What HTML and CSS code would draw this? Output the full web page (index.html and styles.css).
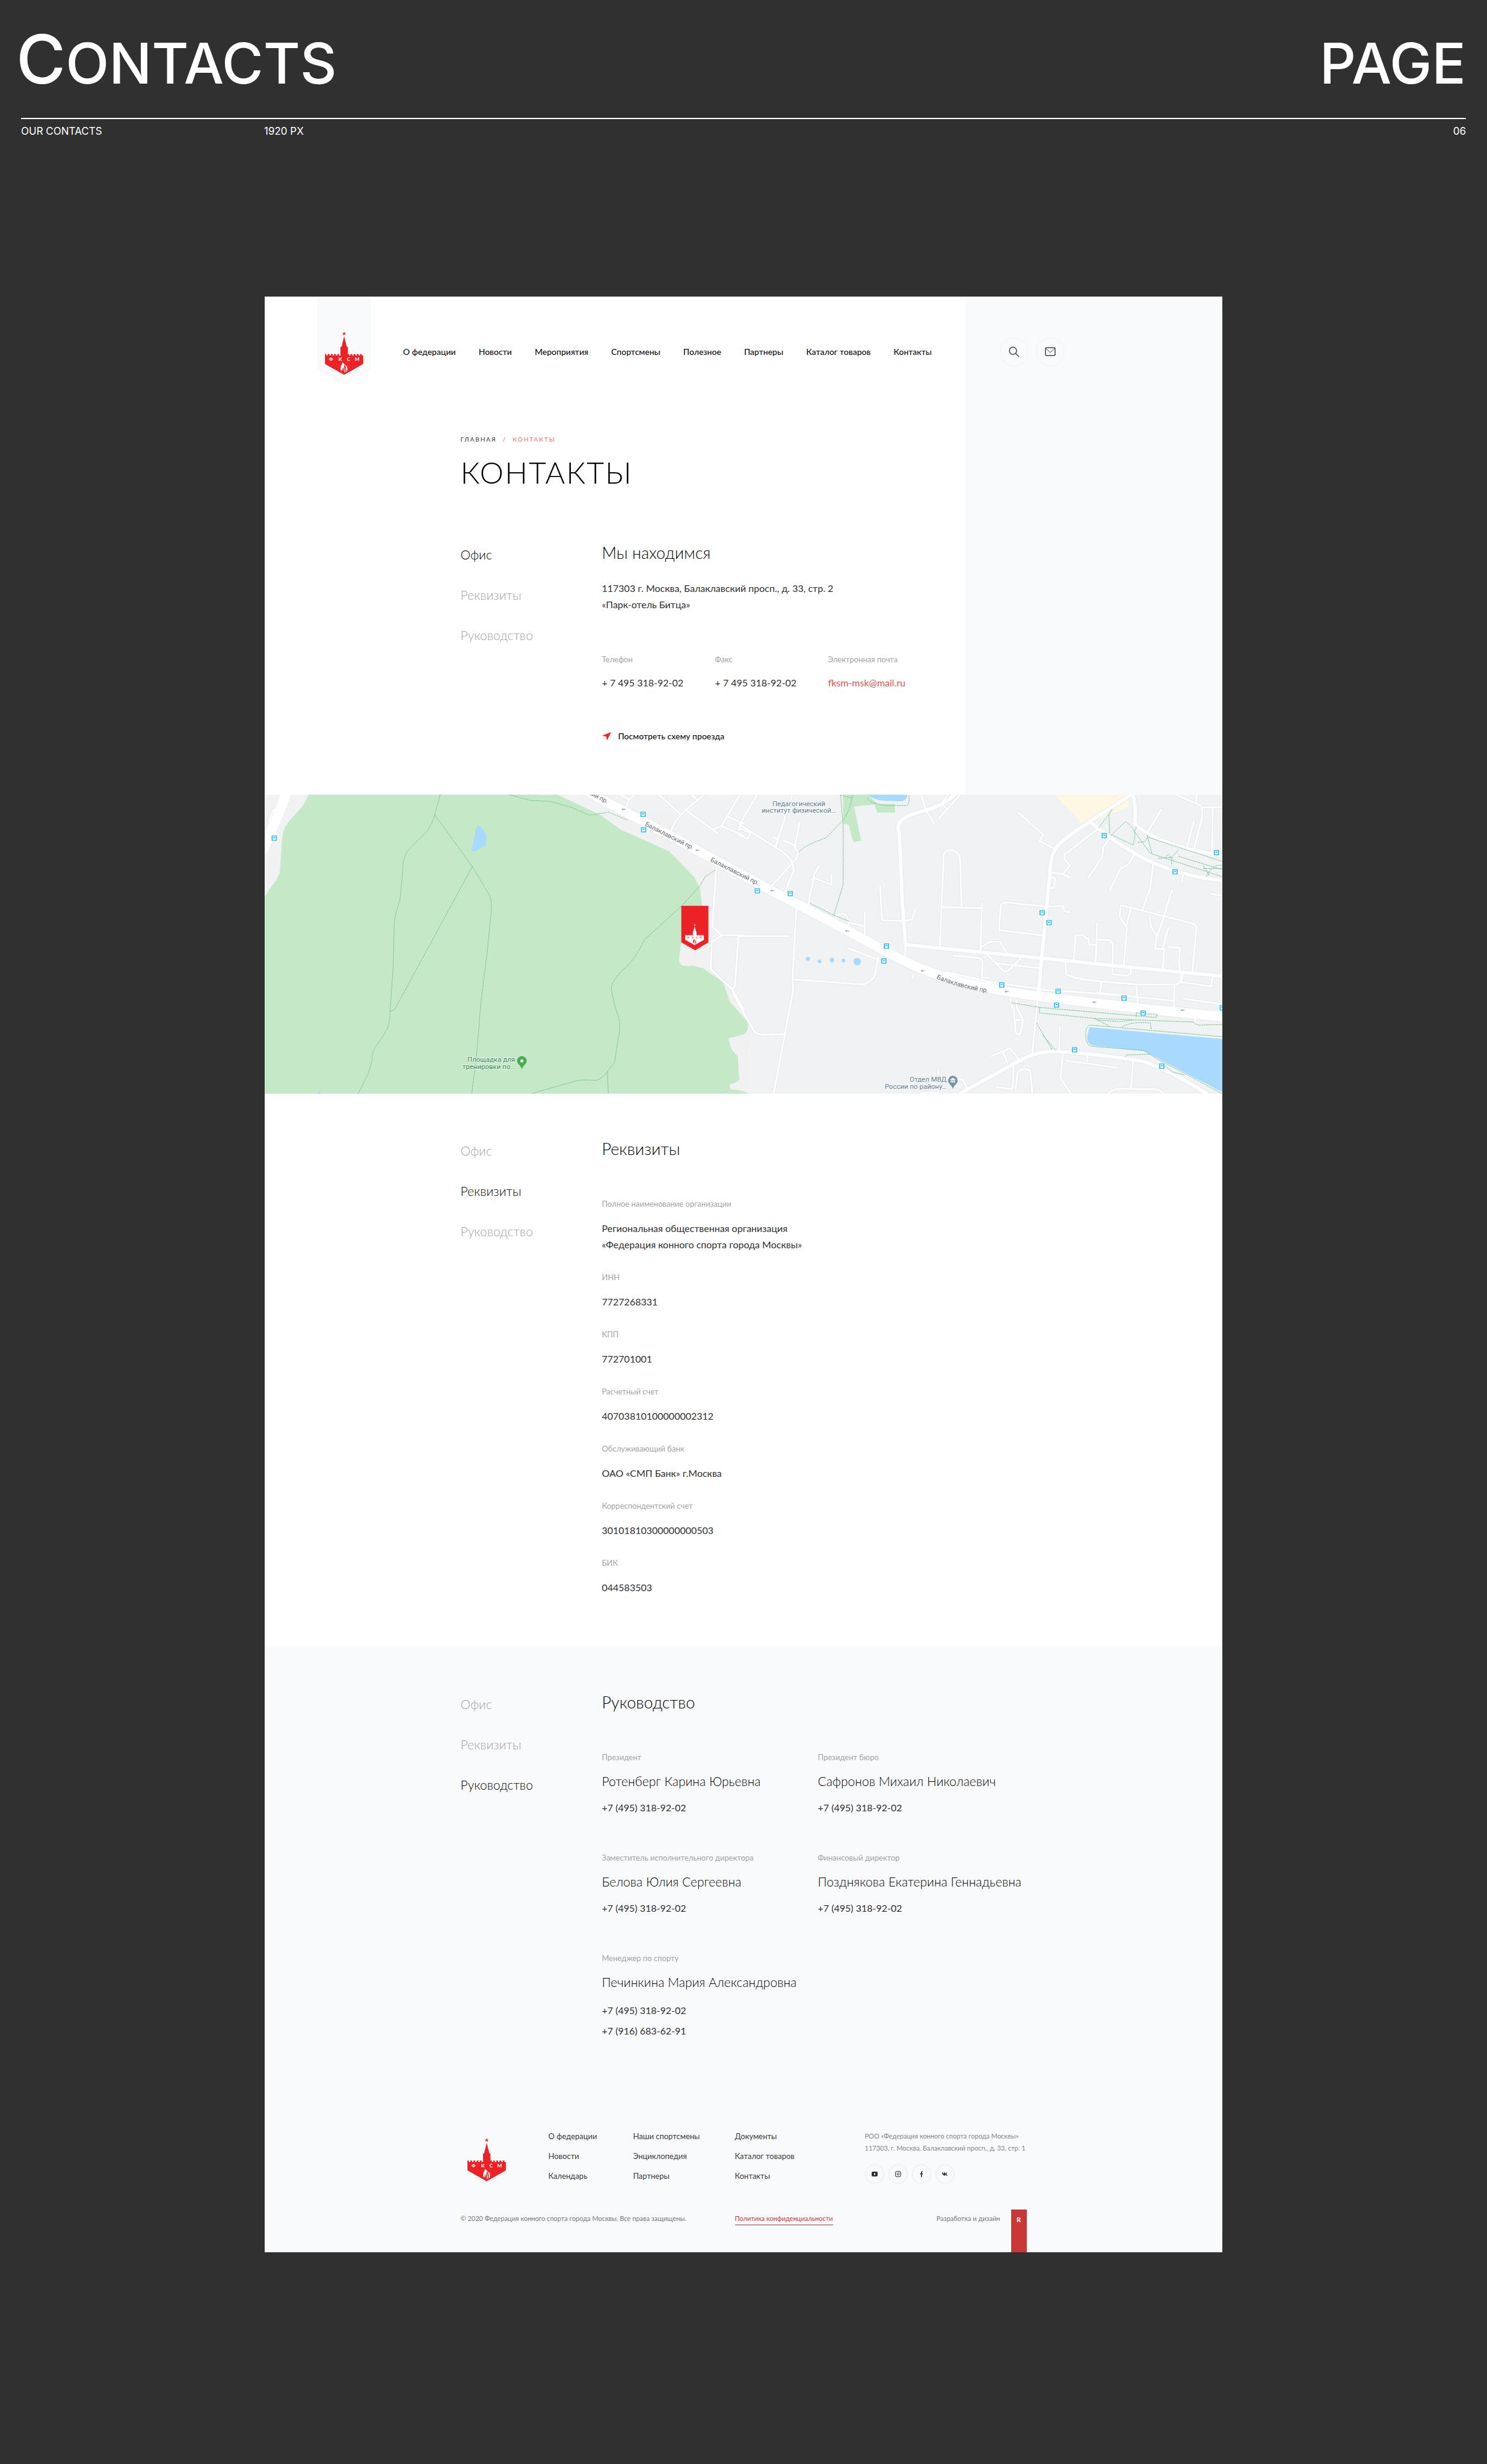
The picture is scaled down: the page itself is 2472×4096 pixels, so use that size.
FILE: index.html
```html
<!DOCTYPE html>
<html lang="ru">
<head>
<meta charset="utf-8">
<meta name="viewport" content="width=device-width, initial-scale=1">
<title>Контакты</title>
<link rel="stylesheet" href="styles.css">
</head>
<body>
<svg class="defs" aria-hidden="true">
  <symbol id="tower" viewBox="0 0 217 245">
    <g fill="var(--logo-ink)">
      <path d="M109 1l3 8h8l-6 5 2 8-7-5-7 5 2-8-6-5h8z"/>
      <path d="M109 27l15 61h6v40h8v8h7v-8h10v8h8v-8h10v8h8v-8h10v8h8v-8h10v8h8v48l-108 61L0 184v-56h8v8h8v-8h10v8h8v-8h10v8h8v-8h10v8h8v-8h10v8h8V88h6z"/>
    </g>
    <g fill="var(--logo-cut)">
      <path d="M99 175l-2 9c-6 8-9 20-8 31 0 6 5 9 8 5l3-11c4-2 7-6 9-10-2 10-6 16-5 27-6-13 5-24 6-37 0-8-5-10-11-14z"/>
      <path d="M106 183c12 7 20 17 22 30 0 7-3 14-9 18 5-17 0-34-13-48z"/>
      <path d="M110 200c7 11 9 23 0 36 0-13 3-22 0-36zM121 189c6 7 10 15 10 25-1-9-5-17-10-25z"/>
    </g>
  </symbol>
  <symbol id="bus" viewBox="0 0 12 12">
    <rect width="12" height="12" rx="2" fill="#fff"/>
    <rect x="1" y="1" width="10" height="10" rx="1" fill="#2bbcf2"/>
    <path d="M3 2.500h6v6.500h-1v1H7v-1H5v1H4v-1H3z" fill="#fff"/>
    <path d="M4 4h4v2H4z" fill="#2bbcf2"/>
  </symbol>
  <symbol id="arrow" viewBox="0 0 10 8">
    <path d="M0 4l5-3-1 2h6v2H4l1 2z" fill="#a0a5aa"/>
  </symbol>
</svg>

<header class="board-head">
  <div class="board-title">
    <h2 class="board-name"><span class="board-initial">C</span>ONTACTS</h2>
    <p class="board-name">PAGE</p>
  </div>
  <div class="board-meta">
    <span>OUR CONTACTS</span>
    <span>1920 PX</span>
    <span class="board-number">06</span>
  </div>
</header>

<div class="site">
  <div class="hero">
    <header class="topbar">
      <a class="badge" href="#" aria-label="ФКСМ"><svg class="logo" viewBox="0 0 217 245"><use href="#tower" width="217" height="245"/><text class="logo-text" x="35 87 134 182" y="166">ФКСМ</text></svg></a>
      <nav class="menu">
        <a href="#">О федерации</a>
        <a href="#">Новости</a>
        <a href="#">Мероприятия</a>
        <a href="#">Спортсмены</a>
        <a href="#">Полезное</a>
        <a href="#">Партнеры</a>
        <a href="#">Каталог товаров</a>
        <a href="#">Контакты</a>
      </nav>
      <div class="tools">
        <button class="round" type="button" aria-label="Поиск">
          <svg width="18" height="18" viewBox="0 0 18 18" fill="none" stroke="#444" stroke-width="1.500"><circle cx="7" cy="7" r="6"/><path d="M11.500 11.500L17 17"/></svg>
        </button>
        <button class="round" type="button" aria-label="Написать письмо">
          <svg width="18" height="16" viewBox="0 0 18 16" fill="none" stroke-width="1.500"><path d="M1.500 2L9 9l7.500-7" stroke="#999"/><rect x="1" y="1" width="16" height="13" rx="1.500" stroke="#444"/></svg>
        </button>
      </div>
    </header>
    <div class="content">
      <nav class="crumbs"><a href="#">ГЛАВНАЯ</a><span class="crumb-sep">/</span><span class="crumb-here">КОНТАКТЫ</span></nav>
      <h1 class="page-title">КОНТАКТЫ</h1>
      <section class="split">
        <nav class="side">
          <a class="current" href="#office" id="office">Офис</a>
          <a href="#details">Реквизиты</a>
          <a href="#team">Руководство</a>
        </nav>
        <div>
          <h2 class="heading">Мы находимся</h2>
          <address class="address">117303 г. Москва, Балаклавский просп., д. 33, стр. 2<br>«Парк-отель Битца»</address>
          <dl class="phones">
            <div><dt>Телефон</dt><dd>+ 7 495 318-92-02</dd></div>
            <div><dt>Факс</dt><dd>+ 7 495 318-92-02</dd></div>
            <div><dt>Электронная почта</dt><dd><a class="mail" href="#">fksm-msk@mail.ru</a></dd></div>
          </dl>
          <a class="route" href="#">
            <svg width="15" height="14" viewBox="0 0 15 14"><path d="M15 0L8 14 7 7.500 0 6z" fill="#ec2227"/></svg>
            Посмотреть схему проезда
          </a>
        </div>
      </section>
    </div>
  </div>

  <svg class="map" viewBox="0 0 1802 563" role="img" aria-label="Карта проезда">
    <defs>
      <g id="streets-east">
        <path d="M0 185L50 235 115 298Q165 345 172 380L177 412 145 535"/>
        <path d="M60 40L15 155 0 215M172 40L118 300M0 240L28 260 38 230 8 210M110 250L125 262M195 180L180 300 190 325 185 355 100 500M145 268L185 295"/>
        <path d="M258 392L243 430 222 590M240 450L298 485 297 435"/>
        <path d="M185 610L172 950 175 1000 148 1220 112 1512M0 737L160 738M172 950L400 975Q430 960 438 925L448 840M352 797L450 855"/>
        <path d="M-20 1010L10 1100 50 1205Q60 1222 80 1222L148 1220"/>
        <path d="M305 660Q315 625 335 628 358 640 350 705M405 618L404 745M352 670L404 688"/>
        <path d="M585 40L600 115 627 185M600 115L650 85 672 40M650 85L670 115M710 40L643 157"/>
        <path d="M453 490L460 660 528 663 557 655 565 608"/>
        <path d="M645 790L658 330Q675 305 690 318 708 330 710 360L715 588M650 594L778 600M780 575L775 810"/>
        <path d="M535 780L533 860M560 925L558 945M775 795L805 765H838L862 825M795 825L850 910Q860 912 870 900L905 845M830 872L970 895"/>
        <path d="M688 833L770 845Q782 850 782 870L780 942 803 942M615 905L650 920 670 915 810 965 960 995M800 965L812 985"/>
        <path d="M897 130L977 238 965 270 1015 310M835 708L840 590Q845 570 860 572L985 592 1040 590 1045 615 1062 620M835 708L970 733"/>
        <path d="M1000 425L1040 432 1062 450M1000 448L1015 455 1010 500 998 502M1148 215L1045 335 1045 360 1062 390 1042 430"/>
        <path d="M1190 255L1170 300 1165 350 1122 450M1270 330L1250 385 1225 405 1190 512M1330 375L1320 500 1295 607M1355 115L1312 225"/>
        <path d="M1075 855L1080 735 1100 730 1123 755V780H1145M1150 675L1145 860M1150 755L1185 757Q1202 765 1200 790L1198 925 1245 932 1258 920V900"/>
        <path d="M1235 885L1245 700 1222 640 1225 585 1455 675Q1470 685 1468 700L1455 910M1258 600L1243 690M1318 645L1322 690 1340 735 1336 800H1360L1378 695M1390 510L1362 650 1342 740M1378 790L1415 795 1412 860 1420 970M1365 800L1360 900"/>
        <path d="M1048 865L1050 925Q1080 950 1160 960L1280 975H1400Q1425 970 1425 910M1163 965L1158 1018 1250 1030M1275 975L1280 1065M1398 980L1395 1085M1425 965L1515 985 1520 940M1425 1045L1560 1075M965 1000L1160 1020 1395 1055"/>
        <path d="M870 1045L882 1100 888 1210Q900 1230 905 1210L912 1150 893 1090 890 1050M885 1152L910 1148"/>
        <path d="M958 1060L942 1310M1030 1185L1028 1300M1040 1310L1032 1435 1065 1512M1050 1350L1218 1385M1118 1325V1355M1265 1345L1258 1490M1185 1512Q1200 1485 1240 1488L1330 1490Q1355 1495 1362 1512"/>
        <path d="M810 1328L870 1288 905 1355M848 1308L862 1360M882 1365L878 1490 825 1480M942 1512L935 1400Q915 1380 895 1405L888 1490M580 1512Q610 1498 640 1512V1398M700 1440L720 1445 730 1480"/>
        <path d="M1400 40L1480 95Q1490 110 1485 160L1460 310M1490 105L1550 103M1520 105L1518 345M1460 170L1437 305M1468 40V85M1515 530L1550 538M1425 430L1422 470M1462 1140L1465 1165"/>
      </g>
      <g id="streets-west">
        <path d="M1165 40L1195 65 1215 40M1195 65L1182 118M1290 40L1360 135M1440 40L1380 115Q1340 170 1330 225M1400 45L1418 70M1380 118L1482 232M1470 210L1495 195 1568 245M1495 195L1555 40M1515 150L1568 185"/>
        <path d="M1478 400L1465 690 1495 733H1568M1495 733L1465 765M1463 760L1460 900 1530 1000 1568 1100M1550 740L1538 985 1530 1000"/>
        <path d="M65 110L42 115 28 170 35 195"/>
      </g>
      <g id="avenues">
        <path d="M695 40Q655 95 610 115 540 140 520 170 505 200 515 230L525 580 535 780"/>
        <path d="M535 780L800 820 1060 860 1250 890 1560 935"/>
        <path d="M1260 40L1120 180Q1030 270 1015 310 1000 350 998 430L972 840 960 1040"/>
        <path d="M1130 180L1190 250Q1280 350 1350 390 1450 450 1560 465M1262 40Q1275 70 1270 180 1280 210 1340 255 1430 315 1560 345"/>
        <path d="M710 1512L900 1350Q960 1300 1020 1305 1180 1320 1300 1355 1400 1410 1500 1512"/>
      </g>
      <path id="prospekt" d="M-560 -40L-446 60-223 240-50 385 100 510 300 670 480 820Q600 920 720 965 850 1015 1000 1040L1300 1095 1560 1135"/>
      <path id="prospekt-name" d="M1264 346Q1310 366 1390 377"/>
    </defs>

    <rect width="1802" height="563" fill="#f1f2f4"/>
    <g class="east">
      <path d="M1010 40L1100 180 1125 180 1250 100V40z" fill="#fef7e3"/>
      <path d="M335 40H412L445 88H500L502 130H445L435 90 370 100 393 268 368 275 352 188 335 185z" fill="#c5e8c6"/>
      <path d="M412 40Q430 68 470 72L525 74Q542 65 540 40z" fill="#a8d9fe"/>
      <path d="M1125 1185L1560 1245V1512L1300 1303 1135 1275Q1115 1265 1118 1230z" fill="#a8d9fe"/>
      <g fill="#a8d9fe"><ellipse cx="222" cy="849" rx="7" ry="10"/><ellipse cx="259" cy="861" rx="6" ry="9"/><ellipse cx="299" cy="855" rx="7" ry="12"/><ellipse cx="336" cy="858" rx="6" ry="9"/><ellipse cx="380" cy="863" rx="12" ry="18"/></g>
      <path d="M0 1380L6 1440 0 1512H30L0 1490z" fill="#c5e8c6"/>
    </g>
    <g class="west">
      <path d="M1100 140L1330 310 1480 420 1465 700V860L1530 1010 1590 1170 1568 1512H1350V140z" fill="#f1f1f1"/>
      <path d="M157 40C140 110 100 150 80 200 65 250 70 330 62 430 50 470 30 500 14 545V1512H1585L1565 1500 1522 1488V1465Q1552 1455 1552 1440L1548 1330 1528 1295 1517 1240 1568 1220Q1585 1200 1580 1160L1522 1060 1500 965 1435 895 1400 882Q1358 895 1357 850L1365 760V590H1432L1425 500 1408 450 1325 320 1170 215 1100 140 960 40Q930 46 900 42L880 40z" fill="#c5e8c6"/>
      <path d="M706 193L718 205 732 240V288L695 322 684 318Q684 300 690 280L698 215z" fill="#a8d9fe"/>
      <path d="M183 1512L190 1498 197 1512zM1485 1512L1512 1500 1515 1503z" fill="#a8d9fe"/>
    </g>

    <g class="casing">
      <g class="east minor"><use href="#streets-east"/></g>
      <g class="west minor"><use href="#streets-west"/></g>
      <g class="east avenue"><use href="#avenues"/></g>
      <g class="east prospekt"><use href="#prospekt"/></g>
    </g>
    <g class="surface">
      <g class="east minor"><use href="#streets-east"/></g>
      <g class="west minor"><use href="#streets-west"/></g>
      <g class="east avenue"><use href="#avenues"/></g>
      <g class="east prospekt"><use href="#prospekt"/></g>
      <g class="west prospekt"><path d="M88 20L60 130 10 310"/></g>
    </g>

    <g class="trails">
      <g class="west">
        <path d="M583 40L565 140Q555 200 535 230L485 305Q462 340 462 400 458 480 452 560 435 640 434 680L430 900 420 1108Q420 1180 405 1210L375 1280Q360 1310 362 1350L350 1410 317 1512"/>
        <path d="M565 140L687 395 740 530Q752 560 748 620L735 820 715 1060 700 1340 685 1512M687 395L440 1085 432 1102 420 1108"/>
        <path d="M802 40L875 70 940 75 1010 105 1065 143 1130 128 1190 168M1475 412L1442 445 1425 490 1365 590 1245 755Q1215 850 1185 890 1140 950 1138 995 1145 1070 1160 1130 1170 1190 1160 1240L1148 1360 1125 1405Q1100 1450 1080 1447 1040 1440 1010 1455L880 1512M1125 1405L1128 1512"/>
      </g>
      <g class="east">
        <path d="M327 40L335 200V485L305 635 228 575M305 635L355 665M365 40Q360 120 330 175L280 255Q210 290 192 325M325 45L365 58M412 60Q430 90 480 95H540Q550 80 545 40"/>
        <path d="M1155 205L1198 115 1187 140 1190 230M1195 240L1240 175Q1275 210 1270 250L1265 290 1195 238M1275 200L1270 225 1320 330 1550 445M1310 240L1325 330M1280 275Q1310 280 1310 250L1550 370M1345 355L1390 350 1388 385M1410 315L1385 355Q1380 320 1370 350M1410 345L1550 410M1490 390L1510 440M1550 405H1490M1500 445Q1520 380 1550 390"/>
        <path d="M875 1065L965 1088 1340 1138 1342 1122 1275 1115V1135M965 1088V1115L1140 1142 1460 1160Q1465 1175 1480 1175L1550 1172M1140 1142L1190 1180M1150 1150L1220 1158 1265 1150M1228 1185Q1260 1155 1320 1165L1323 1195M955 1165L1005 1295M975 1225L1018 1300"/>
        <path d="M1550 1232L1130 1175Q1112 1180 1113 1220 1112 1275 1135 1280L1300 1300 1340 1340 1440 1420 1550 1512M1240 1330L1245 1322 1320 1318M1355 1360L1390 1405 1430 1420"/>
      </g>
    </g>

    <use href="#arrow" x="671" y="24" width="8" height="7"/>
    <use href="#arrow" x="810" y="101" width="8" height="7"/>
    <use href="#arrow" x="951" y="177" width="8" height="7"/>
    <use href="#arrow" x="1092" y="253" width="8" height="7"/>
    <use href="#arrow" x="1234" y="328" width="8" height="7"/>
    <use href="#arrow" x="1392" y="367" width="8" height="7"/>
    <use href="#arrow" x="1557" y="387" width="8" height="7"/>
    <use href="#arrow" x="1723" y="402" width="8" height="7"/>

    <g>
      <use href="#bus" x="921" y="175" width="12" height="12"/>
      <use href="#bus" x="983" y="180" width="12" height="12"/>
      <use href="#bus" x="1164" y="279" width="12" height="12"/>
      <use href="#bus" x="1159" y="307" width="12" height="12"/>
      <use href="#bus" x="1574" y="71" width="12" height="12"/>
      <use href="#bus" x="1785" y="103" width="12" height="12"/>
      <use href="#bus" x="1707" y="139" width="12" height="12"/>
      <use href="#bus" x="1457" y="216" width="12" height="12"/>
      <use href="#bus" x="1470" y="235" width="12" height="12"/>
      <use href="#bus" x="1381" y="352" width="12" height="12"/>
      <use href="#bus" x="1487" y="364" width="12" height="12"/>
      <use href="#bus" x="1484" y="390" width="12" height="12"/>
      <use href="#bus" x="1611" y="377" width="12" height="12"/>
      <use href="#bus" x="1647" y="405" width="12" height="12"/>
      <use href="#bus" x="1796" y="395" width="12" height="12"/>
      <use href="#bus" x="1518" y="474" width="12" height="12"/>
      <use href="#bus" x="1682" y="505" width="12" height="12"/>
      <use href="#bus" x="706" y="31" width="12" height="12"/>
      <use href="#bus" x="707" y="60" width="12" height="12"/>
      <use href="#bus" x="12" y="76" width="12" height="12"/>
    </g>

    <g class="street-name">
      <text transform="translate(644 17) rotate(27)" text-anchor="end">Балаклавский пр.</text>
      <text transform="translate(715 58) rotate(27)">Балаклавский пр.</text>
      <text transform="translate(838 125) rotate(27)">Балаклавский пр.</text>
      <text><textPath href="#prospekt-name">Балаклавский пр.</textPath></text>
    </g>
    <g class="place" fill="#5f7f8f">
      <text x="1005" y="21" text-anchor="middle">Педагогический</text>
      <text x="1005" y="34" text-anchor="middle">институт физической…</text>
      <text x="1283" y="540" text-anchor="end">Отдел МВД</text>
      <text x="1283" y="553" text-anchor="end">России по району…</text>
      <path d="M1295 529a9 9 0 0 1 9 9c0 6-7 8-9 16-2-8-9-10-9-16a9 9 0 0 1 9-9z" fill="#7494a5"/>
      <path d="M1290 536l5-3 5 3v1h-10zM1291 538h2v4h-2zM1294 538h2v4h-2zM1297 538h2v4h-2z" fill="#fff"/>
    </g>
    <g class="place" fill="#2f8550">
      <text x="471" y="503" text-anchor="end">Площадка для</text>
      <text x="471" y="516" text-anchor="end">тренировки по…</text>
      <path d="M484 492a9 9 0 0 1 9 9c0 6-7 8-9 16-2-8-9-10-9-16a9 9 0 0 1 9-9z" fill="#45af4b"/>
      <circle cx="484" cy="501" r="3" fill="#fff"/>
    </g>

    <path d="M784 209h51v69l-25 15-26-15z" fill="#ec2227"/>
    <svg class="pin-logo" x="791" y="243" width="36" height="40" viewBox="0 0 217 245"><use href="#tower" width="217" height="245"/><text class="logo-text" x="35 87 134 182" y="166">ФКСМ</text></svg>
  </svg>

  <section class="section content split" id="details">
    <nav class="side">
      <a href="#office">Офис</a>
      <a class="current" href="#details">Реквизиты</a>
      <a href="#team">Руководство</a>
    </nav>
    <div>
      <h2 class="heading">Реквизиты</h2>
      <dl class="facts">
        <div><dt>Полное наименование организации</dt><dd>Региональная общественная организация<br>«Федерация конного спорта города Москвы»</dd></div>
        <div><dt>ИНН</dt><dd>7727268331</dd></div>
        <div><dt>КПП</dt><dd>772701001</dd></div>
        <div><dt>Расчетный счет</dt><dd>40703810100000002312</dd></div>
        <div><dt>Обслуживающий банк</dt><dd>ОАО «СМП Банк» г.Москва</dd></div>
        <div><dt>Корреспондентский счет</dt><dd>30101810300000000503</dd></div>
        <div><dt>БИК</dt><dd>044583503</dd></div>
      </dl>
    </div>
  </section>

  <div class="tinted">
    <section class="content split team-section" id="team">
      <nav class="side">
        <a href="#office">Офис</a>
        <a href="#details">Реквизиты</a>
        <a class="current" href="#team">Руководство</a>
      </nav>
      <div>
        <h2 class="heading">Руководство</h2>
        <div class="team">
          <article class="person"><p class="role">Президент</p><h3 class="name">Ротенберг Карина Юрьевна</h3><p>+7 (495) 318-92-02</p></article>
          <article class="person"><p class="role">Президент бюро</p><h3 class="name">Сафронов Михаил Николаевич</h3><p>+7 (495) 318-92-02</p></article>
          <article class="person"><p class="role">Заместитель исполнительного директора</p><h3 class="name">Белова Юлия Сергеевна</h3><p>+7 (495) 318-92-02</p></article>
          <article class="person"><p class="role">Финансовый директор</p><h3 class="name">Позднякова Екатерина Геннадьевна</h3><p>+7 (495) 318-92-02</p></article>
          <article class="person"><p class="role">Менеджер по спорту</p><h3 class="name">Печинкина Мария Александровна</h3><p class="numbers">+7 (495) 318-92-02<br>+7 (916) 683-62-91</p></article>
        </div>
      </div>
    </section>

    <footer class="content">
      <div class="foot-top">
        <a class="foot-logo" href="#" aria-label="ФКСМ"><svg class="logo" viewBox="0 0 217 245"><use href="#tower" width="217" height="245"/><text class="logo-text" x="35 87 134 182" y="166">ФКСМ</text></svg></a>
        <nav class="foot-links"><a href="#">О федерации</a><a href="#">Новости</a><a href="#">Календарь</a></nav>
        <nav class="foot-links"><a href="#">Наши спортсмены</a><a href="#">Энциклопедия</a><a href="#">Партнеры</a></nav>
        <nav class="foot-links"><a href="#">Документы</a><a href="#">Каталог товаров</a><a href="#">Контакты</a></nav>
        <div>
          <address class="foot-address">РОО «Федерация конного спорта города Москвы»<br>117303, г. Москва, Балаклавский просп., д. 33, стр. 1</address>
          <div class="social">
            <a href="#" aria-label="YouTube"><svg width="10" height="10" viewBox="0 0 10 10"><rect y="1" width="10" height="8" rx="2" fill="#2e2e2e"/><path d="M4 3l3 2-3 2z" fill="#fff"/></svg></a>
            <a href="#" aria-label="Instagram"><svg width="10" height="10" viewBox="0 0 10 10" fill="none" stroke="#2e2e2e"><rect x=".5" y=".5" width="9" height="9" rx="2.500"/><circle cx="5" cy="5" r="2"/><path d="M7.400 2.300h.6"/></svg></a>
            <a href="#" aria-label="Facebook"><svg width="10" height="10" viewBox="0 0 10 10"><path d="M4 10V5.500H2.600V4H4V2.500C4 .9 5 0 7.200.2v1.400C6 1.500 5.700 1.800 5.700 2.700V4h1.500L7 5.500H5.700V10z" fill="#2e2e2e"/></svg></a>
            <a href="#" aria-label="ВКонтакте"><svg width="10" height="10" viewBox="0 0 10 10"><path d="M0 2.500h1.600c.3 1.500.8 2.400 1.400 2.700V3.400L2.500 2.500h2.700v2.300c.7-.2 1.300-1.200 1.700-2.300h1.600C8.200 3.700 7.600 4.500 7 5c.8.5 1.700 1.400 2.200 2.700H7.500C7 6.700 6.200 6 5.200 5.900v1.800C2.300 7.900.4 6 0 2.500z" fill="#2e2e2e"/></svg></a>
          </div>
        </div>
      </div>
      <div class="foot-bottom">
        <p>© 2020 Федерация конного спорта города Москвы. Все права защищены.</p>
        <a class="policy" href="#">Политика конфиденциальности</a>
        <p class="credit">Разработка и дизайн</p>
        <a class="studio" href="#">R</a>
      </div>
    </footer>
  </div>
</div>
</body>
</html>
```
FILE: styles.css
```css
:root {
  --ink: #303030;
  --strong: #050505;
  --muted: #a3a3a6;
  --tint: #f9fafc;
  --logo-ink: #ec2227;
  --logo-cut: #fff;
}

* { box-sizing: border-box; }

body {
  margin: 0;
  padding-bottom: 350px;
  background: #303030;
  color: var(--ink);
  font: 400 16px/27px Lato, "Open Sans", sans-serif;
}

h1, h2, h3, p, dl, dd { margin: 0; font-weight: inherit; }
address { font-style: normal; }
a { color: inherit; text-decoration: none; }
.defs { display: block; width: 0; height: 0; }
.logo { display: block; width: 64px; height: 72px; }
.logo-text { font: 700 28px Lato, sans-serif; text-anchor: middle; fill: var(--logo-cut); }

/* board header */
.board-head { padding: 46px 35px 0; margin-bottom: 265px; color: #fff; font-family: Inter, sans-serif; font-weight: 400; }
.board-title { display: flex; justify-content: space-between; align-items: baseline; padding-bottom: 39px; border-bottom: 2px solid #fff; }
.board-name { font-size: 94px; line-height: 104px; font-weight: 500; margin-left: -8px; }
.board-initial { font-size: 112px; }
.board-meta { display: grid; grid-template-columns: 404px 1fr auto; padding-top: 10px; font-size: 17px; line-height: 20px; }

/* site */
.site { margin: 0 17.8%; background: #fff; }
.content { max-width: 941px; margin: 0 auto; }
.hero { padding-bottom: 87px; background: linear-gradient(to right, #fff 73.2%, var(--tint) 73.2%); }

.topbar { display: flex; align-items: center; height: 184px; padding-left: 87px; }
.badge {
  align-self: flex-start;
  width: 90px;
  height: 147px;
  padding: 58px 13px 0;
  background: var(--tint);
  clip-path: polygon(0 0, 100% 0, 100% 82%, 50% 100%, 0 82%);
}
.menu { display: flex; gap: 38px; margin-left: 53px; color: #111; font-size: 14px; line-height: 20px; font-weight: 500; white-space: nowrap; }
.tools { display: flex; gap: 12px; margin-left: 113px; }
.round {
  display: grid;
  place-items: center;
  width: 48px;
  height: 48px;
  padding: 0;
  border: 1px solid #f0f1f3;
  border-radius: 50%;
  background: transparent;
}

.crumbs { display: flex; gap: 10px; padding-top: 45px; font-size: 10px; line-height: 16px; letter-spacing: 2px; }
.crumb-sep, .crumb-here { color: #ee6a66; }
.page-title { margin: 17px 0 86px; color: var(--strong); font-size: 50px; line-height: 60px; font-weight: 300; letter-spacing: 2px; }

.split { display: grid; grid-template-columns: 235px 1fr; }
.side { display: flex; flex-direction: column; gap: 39px; padding-top: 7px; color: #a4a4a6; font-size: 21px; line-height: 28px; font-weight: 300; }
.side .current { color: var(--strong); }
.heading { color: var(--strong); font-size: 27px; line-height: 36px; font-weight: 300; }

.address { margin-top: 27px; }
dt, .role { color: var(--muted); font-size: 13px; line-height: 20px; }
.phones { display: grid; grid-template-columns: 188px 188px 1fr; margin: 68px 0 66px; }
.phones dd { margin-top: 15px; }
.mail { color: #e9504f; }
.route { display: flex; align-items: center; gap: 12px; color: #111; font-size: 14px; line-height: 20px; font-weight: 500; }

/* map */
.map { display: block; width: 100%; height: auto; }
.map path { vector-effect: non-scaling-stroke; }
.west { transform: matrix(.5804, 0, 0, .38265, -8, -16); }
.east { transform: matrix(.5867, 0, 0, .38265, 892, -16); }
.casing, .surface { fill: none; stroke-linejoin: round; stroke-linecap: round; }
.casing { stroke: #e6e8eb; }
.surface { stroke: #fff; }
.casing .minor { stroke-width: 5px; }
.surface .minor { stroke-width: 3px; }
.casing .avenue { stroke-width: 8px; }
.surface .avenue { stroke-width: 6px; }
.casing .prospekt { stroke-width: 18px; }
.surface .prospekt { stroke-width: 16px; }
.trails { fill: none; stroke: #6fc189; stroke-width: 1px; stroke-dasharray: 3 1; }
.street-name { fill: #666b70; font: 400 12px Roboto, sans-serif; }
.place { font: 400 13px Roboto, sans-serif; }
.place text { paint-order: stroke; stroke: rgba(255, 255, 255, .7); stroke-width: 2px; }
.pin-logo { --logo-ink: #fff; --logo-cut: #ec2227; }

/* details */
.section { padding: 74px 0 86px; }
.facts { display: grid; gap: 31px; margin-top: 63px; }
.facts dd { margin-top: 17px; }

/* team */
.tinted { background: var(--tint); }
.team-section { padding: 74px 0 148px; }
.team { display: grid; grid-template-columns: 359px 1fr; row-gap: 60px; margin-top: 63px; }
.name { margin: 16px 0; color: var(--strong); font-size: 21px; line-height: 28px; font-weight: 300; white-space: nowrap; }
.numbers { line-height: 34px; }

/* footer */
.foot-top { display: grid; grid-template-columns: 146px 141px 169px 216px 1fr; }
.foot-logo { padding: 13px 0 0 11px; }
.foot-links { display: flex; flex-direction: column; gap: 13px; font-size: 13px; line-height: 20px; color: #3a3a3a; }
.foot-address { color: #85868a; font-size: 11px; line-height: 20px; white-space: nowrap; }
.social { display: flex; gap: 7px; margin-top: 17px; }
.social a { display: grid; place-items: center; width: 32px; height: 32px; border: 1px solid #e8e9ec; border-radius: 50%; }
.foot-bottom { display: grid; grid-template-columns: 456px 1fr auto 26px; align-items: start; margin-top: 43px; color: #77787a; font-size: 11px; line-height: 20px; }
.foot-bottom > p { padding-top: 5px; }
.policy { justify-self: start; margin-top: 5px; border-bottom: 1px solid #c83a3c; color: #c83a3c; }
.credit { margin-right: 18px; }
.studio { height: 71px; padding-top: 7px; background: #c93737; color: #fff; font-weight: 700; text-align: center; }
```
